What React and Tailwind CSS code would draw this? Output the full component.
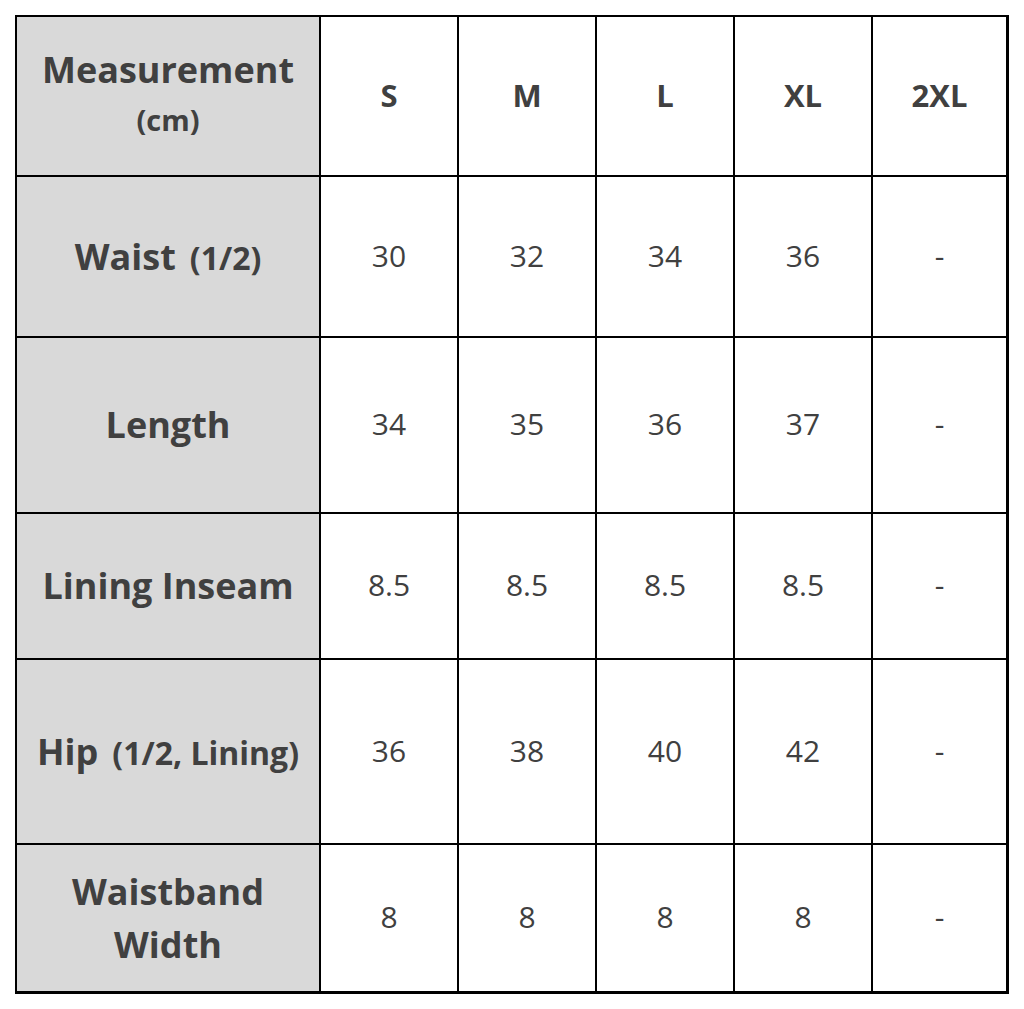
const sizes = ["S", "M", "L", "XL", "2XL"];

const rows = [
  { label: "Waist", sub: "(1/2)", values: ["30", "32", "34", "36", "-"], h: "h-[159px]" },
  { label: "Length", values: ["34", "35", "36", "37", "-"], h: "h-[174px]" },
  { label: "Lining Inseam", values: ["8.5", "8.5", "8.5", "8.5", "-"], h: "h-[144px]" },
  { label: "Hip", sub: "(1/2, Lining)", values: ["36", "38", "40", "42", "-"], h: "h-[183px]" },
  { label: "Waistband Width", values: ["8", "8", "8", "8", "-"], h: "h-[146px]", wrap: true },
];

const App = () => {
  return (
    <div className="w-[1024px] h-[1009px] bg-white font-['Open_Sans','Noto_Sans',sans-serif] text-[#404040]">
      <div className="ml-[15px] mt-[15px] w-[994px] bg-black pt-[2px] pl-[2px] pr-[3px] pb-[3px]">
        <div className="grid grid-cols-[302px_136px_136px_136px_136px_133px] gap-[2px]">
          <div className="h-[158px] bg-[#d9d9d9] flex flex-col items-center justify-center font-bold">
            <div className="text-[36px] leading-[50px] -mt-[2px]">Measurement</div>
            <div className="text-[29px] leading-[50px]">(cm)</div>
          </div>
          {sizes.map((s) => (
            <div key={s} className="h-[158px] bg-white flex items-center justify-center font-bold text-[31px] pb-[2px]">
              {s}
            </div>
          ))}
          {rows.map((row) => (
            <>
              <div
                key={row.label}
                className={`${row.h} bg-[#d9d9d9] flex items-center justify-center font-bold text-center`}
              >
                {row.wrap ? (
                  <div className="text-[36px] leading-[53px] w-[220px]">{row.label}</div>
                ) : (
                  <div className="text-[36px] whitespace-nowrap">
                    {row.label}
                    {row.sub && <span className="text-[32px] ml-[14px]">{row.sub}</span>}
                  </div>
                )}
              </div>
              {row.values.map((v, i) => (
                <div
                  key={row.label + i}
                  className={`${row.h} bg-white flex items-center justify-center text-[30px] pb-[3px]`}
                >
                  {v}
                </div>
              ))}
            </>
          ))}
        </div>
      </div>
    </div>
  );
};

export default App;
